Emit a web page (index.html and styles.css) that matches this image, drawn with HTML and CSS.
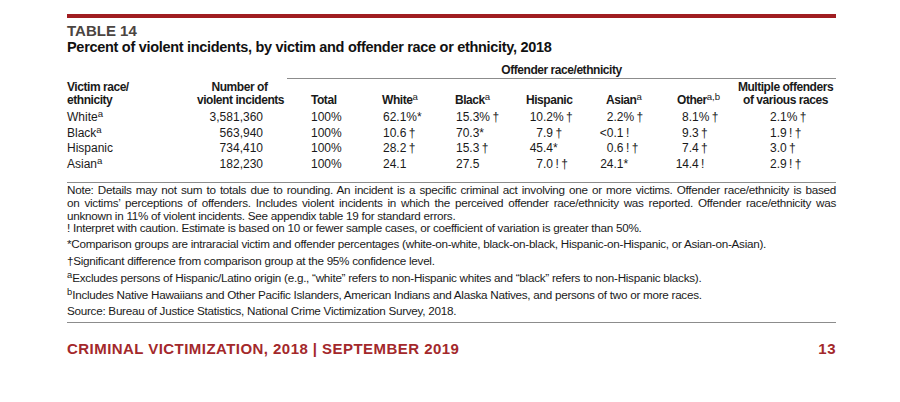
FILE: index.html
```html
<!DOCTYPE html>
<html lang="en">
<head>
<meta charset="utf-8">
<title>Table 14</title>
<link rel="stylesheet" href="styles.css">
</head>
<body>
<main class="page">
  <div class="rule"></div>
  <p class="label">TABLE 14</p>
  <h1 class="title">Percent of violent incidents, by victim and offender race or ethnicity, 2018</h1>
  <div class="tbl">
    <div class="group">Offender race/ethnicity</div>
    <div class="hrow">
      <div>Victim race/<br>ethnicity</div>
      <div>Number of<br>violent incidents</div>
      <div>Total</div>
      <div>White<sup class="sup">a</sup></div>
      <div>Black<sup class="sup">a</sup></div>
      <div>Hispanic</div>
      <div>Asian<sup class="sup">a</sup></div>
      <div>Other<sup class="sup">a,b</sup></div>
      <div>Multiple offenders<br>of various races</div>
    </div>
    <div class="row first">
      <div>White<sup class="sup">a</sup></div>
      <div>3,581,360</div>
      <div>100%</div>
      <div>62.1%*</div>
      <div>15.3%&thinsp;†</div>
      <div><span class="int">10</span>.2%&thinsp;†</div>
      <div><span class="int">2</span>.2%&thinsp;†</div>
      <div><span class="int">8</span>.1%&thinsp;†</div>
      <div>2.1%&thinsp;†</div>
    </div>
    <div class="row">
      <div>Black<sup class="sup">a</sup></div>
      <div>563,940</div>
      <div>100%</div>
      <div>10.6&thinsp;†</div>
      <div>70.3*</div>
      <div><span class="int">7</span>.9&thinsp;†</div>
      <div><span class="int">&lt;0</span>.1&thinsp;!</div>
      <div><span class="int">9</span>.3&thinsp;†</div>
      <div>1.9&thinsp;!&thinsp;†</div>
    </div>
    <div class="row">
      <div>Hispanic</div>
      <div>734,410</div>
      <div>100%</div>
      <div>28.2&thinsp;†</div>
      <div>15.3&thinsp;†</div>
      <div><span class="int">45</span>.4*</div>
      <div><span class="int">0</span>.6&thinsp;!&thinsp;†</div>
      <div><span class="int">7</span>.4&thinsp;†</div>
      <div>3.0&thinsp;†</div>
    </div>
    <div class="row">
      <div>Asian<sup class="sup">a</sup></div>
      <div>182,230</div>
      <div>100%</div>
      <div>24.1</div>
      <div>27.5</div>
      <div><span class="int">7</span>.0&thinsp;!&thinsp;†</div>
      <div><span class="int">24</span>.1*</div>
      <div><span class="int">14</span>.4&thinsp;!</div>
      <div>2.9&thinsp;!&thinsp;†</div>
    </div>
  </div>
  <div class="notes">
    <div class="note">
      <span class="jline">Note: Details may not sum to totals due to rounding. An incident is a specific criminal act involving one or more victims. Offender race/ethnicity is based</span>
      <span class="jline">on victims’ perceptions of offenders. Includes violent incidents in which the perceived offender race/ethnicity was reported. Offender race/ethnicity was</span>
      <span class="line">unknown in 11% of violent incidents. See appendix table 19 for standard errors.</span>
    </div>
    <p class="fn">! Interpret with caution. Estimate is based on 10 or fewer sample cases, or coefficient of variation is greater than 50%.</p>
    <p class="fn">*Comparison groups are intraracial victim and offender percentages (white-on-white, black-on-black, Hispanic-on-Hispanic, or Asian-on-Asian).</p>
    <p class="fn">†Significant difference from comparison group at the 95% confidence level.</p>
    <p class="fn"><sup class="sup">a</sup>Excludes persons of Hispanic/Latino origin (e.g., “white” refers to non-Hispanic whites and “black” refers to non-Hispanic blacks).</p>
    <p class="fn"><sup class="sup">b</sup>Includes Native Hawaiians and Other Pacific Islanders, American Indians and Alaska Natives, and persons of two or more races.</p>
    <p class="fn">Source: Bureau of Justice Statistics, National Crime Victimization Survey, 2018.</p>
  </div>
  <footer class="foot">
    <span class="foot-title">CRIMINAL VICTIMIZATION, 2018 | SEPTEMBER 2019</span>
    <span class="foot-page">13</span>
  </footer>
</main>
</body>
</html>
```
FILE: styles.css
```css
* { box-sizing: border-box; }
html, body { margin: 0; background: #ffffff; }
body {
  font-family: "Liberation Sans", Arial, sans-serif;
  color: #1a1a1a;
}
.page {
  width: 900px;
  height: 402px;
  padding: 14px 64px 0 67px;
}
.rule { height: 4px; background: #a01d21; }
.label {
  margin: 4px 0 0;
  font-weight: bold;
  font-size: 15px;
  line-height: 17px;
  color: #4b4541;
}
.title {
  margin: 0;
  font-weight: bold;
  font-size: 14.5px;
  line-height: 16px;
  letter-spacing: -0.3px;
  color: #111111;
}
.tbl {
  display: grid;
  grid-template-columns: 130px 85px 63px 85px 75px 80px 70px 75px 106px;
  margin-top: 9px;
  padding-bottom: 9px;
  border-bottom: 1px solid #8c8c8c;
  font-size: 12px;
}
.group {
  grid-column: 3 / span 7;
  margin-left: 5px;
  padding-bottom: 1px;
  border-bottom: 1px solid #8c8c8c;
  text-align: center;
  font-weight: bold;
  font-size: 12px;
  line-height: 13px;
  letter-spacing: -0.45px;
}
.hrow, .row { display: contents; }
.hrow > * {
  align-self: end;
  padding-top: 2px;
  font-weight: bold;
  font-size: 12px;
  line-height: 13px;
  letter-spacing: -0.45px;
  white-space: nowrap;
}
.row > * { line-height: 15.67px; white-space: nowrap; }
.row.first > * { padding-top: 3px; }

.hrow > :nth-child(2) { text-align: center; }
.hrow > :nth-child(3) { padding-left: 29px; }
.hrow > :nth-child(4) { padding-left: 37px; }
.hrow > :nth-child(5) { padding-left: 25px; }
.hrow > :nth-child(6) { padding-left: 21px; }
.hrow > :nth-child(7) { padding-left: 21px; }
.hrow > :nth-child(8) { padding-left: 22px; }
.hrow > :nth-child(9) { padding-left: 5px; text-align: center; }

.row > :nth-child(2) { text-align: right; padding-right: 19px; }
.row > :nth-child(3) { padding-left: 29px; }
.row > :nth-child(4) { padding-left: 38px; }
.row > :nth-child(5) { padding-left: 26px; }
.row > :nth-child(6) { padding-left: 22px; }
.row > :nth-child(7) { padding-left: 14.5px; }
.row > :nth-child(8) { padding-left: 20.7px; }
.row > :nth-child(9) { padding-left: 40px; }

.int { display: inline-block; text-align: right; width: 14px; }
.row > :nth-child(6) .int { width: 16px; }
.row > :nth-child(8) .int { width: 13px; }

.sup {
  font-size: 0.8em;
  font-weight: normal;
  line-height: 0;
  vertical-align: 4px;
  letter-spacing: 0;
}
.notes {
  padding-bottom: 2px;
  border-bottom: 1px solid #8c8c8c;
  font-size: 11.7px;
  letter-spacing: -0.27px;
  white-space: nowrap;
}
.notes p { margin: 0; }
.note { line-height: 13px; }
.jline, .line { display: block; }
.jline { text-align: justify; text-align-last: justify; }
.fn { line-height: 16.7px; }
.fn:nth-child(2) { margin-top: -2px; }

.foot {
  display: flex;
  justify-content: space-between;
  align-items: baseline;
  margin-top: 18px;
  font-weight: bold;
  font-size: 15px;
  line-height: 16px;
  color: #a3282b;
}
.foot-title { letter-spacing: 0.45px; }
.foot-page { letter-spacing: 0.5px; }
```
